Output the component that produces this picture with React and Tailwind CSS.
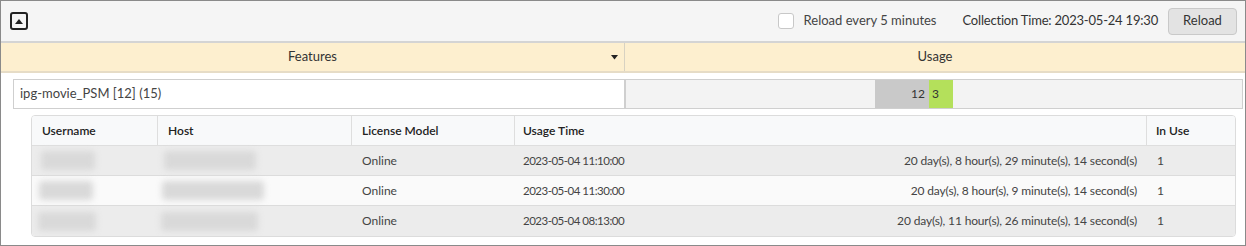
import React from "react";

const rows = [
  { u: 54, h: 92, uo: 9, ho: 6, time: "2023-05-04 11:10:00", dur: "20 day(s), 8 hour(s), 29 minute(s), 14 second(s)", bg: "bg-[#ececec]" },
  { u: 54, h: 102, uo: 7, ho: 4, time: "2023-05-04 11:30:00", dur: "20 day(s), 8 hour(s), 9 minute(s), 14 second(s)", bg: "bg-[#fafafa]" },
  { u: 58, h: 97, uo: 6, ho: 3, time: "2023-05-04 08:13:00", dur: "20 day(s), 11 hour(s), 26 minute(s), 14 second(s)", bg: "bg-[#ececec]" },
];

function Blur({ w, o }) {
  return (
    <div style={{ marginLeft: o }}>
      <div className="h-[19px] bg-[#d9d9d9] blur-[3px] rounded-sm" style={{ width: w }} />
    </div>
  );
}

export default function App() {
  return (
    <div
      className="w-[1246px] h-[246px] bg-white text-[#333] border border-[#8a8a8a] box-border flex flex-col"
      style={{ fontFamily: "Lato, 'Noto Sans', sans-serif" }}
    >
      <div className="h-[42px] bg-[#f5f5f5] border-b-2 border-[#d4d4d4] flex items-center pl-[9px] pr-[8px] shrink-0">
        <div className="w-[18px] h-[18px] border-2 border-[#222] rounded-[3px] flex items-center justify-center">
          <svg width="8" height="5" viewBox="0 0 8 5"><path d="M0 5 L4 0 L8 5 Z" fill="#222" /></svg>
        </div>
        <div className="flex-1" />
        <div className="w-[16px] h-[16px] bg-white border border-[#c8c8c8] rounded-[3px]" />
        <span className="ml-[10px] text-[13px] text-[#444]">Reload every 5 minutes</span>
        <span className="ml-[26px] text-[13px] text-[#333] tracking-[-0.2px]">Collection Time: 2023-05-24 19:30</span>
        <button className="ml-[10px] w-[69px] h-[27px] bg-[#e3e3e3] border border-[#c9c9c9] rounded-[4px] text-[13px] text-[#333]">Reload</button>
      </div>
      <div className="h-[30px] bg-[#fdefcf] border-b-2 border-[#e6dcc6] flex text-[13px] shrink-0">
        <div className="w-[624px] relative flex items-center justify-center border-r border-[#d8d2c2]">
          Features
          <svg className="absolute left-[610px] top-[12px]" width="7" height="5" viewBox="0 0 7 5"><path d="M0 0 H7 L3.5 4.5 Z" fill="#222" /></svg>
        </div>
        <div className="flex-1 flex items-center justify-center">Usage</div>
      </div>
      <div className="flex pt-[6px] shrink-0">
        <div className="ml-[12px] w-[612px] h-[30px] border border-[#cfcfcf] flex items-center pl-[6px] text-[13px] text-[#444] bg-white">
          ipg-movie_PSM [12] (15)
        </div>
        <div className="w-[618px] h-[30px] border border-[#cfcfcf] bg-[#f3f3f3] flex">
          <div className="ml-[249px] w-[54px] bg-[#c9c9c9] flex items-center justify-end pr-[4px] text-[12px] text-[#333]">12</div>
          <div className="w-[24px] bg-[#b4e05b] flex items-center pl-[3px] text-[12px] text-[#333]">3</div>
        </div>
      </div>
      <div className="ml-[30px] mt-[6px] w-[1205px] border border-[#dcdcdc] rounded-[4px] overflow-hidden text-[12px]">
        <div className="flex h-[30px] bg-[#f8f9fa] border-b border-[#dedede] font-semibold text-[#222]">
          <div className="w-[126px] pl-[10px] flex items-center border-r border-[#dedede]">Username</div>
          <div className="w-[194px] pl-[10px] flex items-center border-r border-[#dedede]">Host</div>
          <div className="w-[163px] pl-[10px] flex items-center border-r border-[#dedede]">License Model</div>
          <div className="w-[632px] pl-[8px] flex items-center border-r border-[#dedede]">Usage Time</div>
          <div className="flex-1 pl-[9px] flex items-center">In Use</div>
        </div>
        {rows.map((r, i) => (
          <div key={i} className={`flex h-[30px] ${r.bg} ${i < 2 ? "border-b border-[#dcdcdc]" : ""} text-[#444]`}>
            <div className="w-[126px] flex items-center"><Blur w={r.u} o={r.uo} /></div>
            <div className="w-[194px] flex items-center"><Blur w={r.h} o={r.ho} /></div>
            <div className="w-[163px] pl-[10px] flex items-center">Online</div>
            <div className="w-[632px] pl-[8px] pr-[10px] flex items-center justify-between">
              <span className="text-[11.5px] tracking-[-0.5px]">{r.time}</span>
              <span className="tracking-[-0.15px]">{r.dur}</span>
            </div>
            <div className="flex-1 pl-[10px] flex items-center">1</div>
          </div>
        ))}
      </div>
    </div>
  );
}
